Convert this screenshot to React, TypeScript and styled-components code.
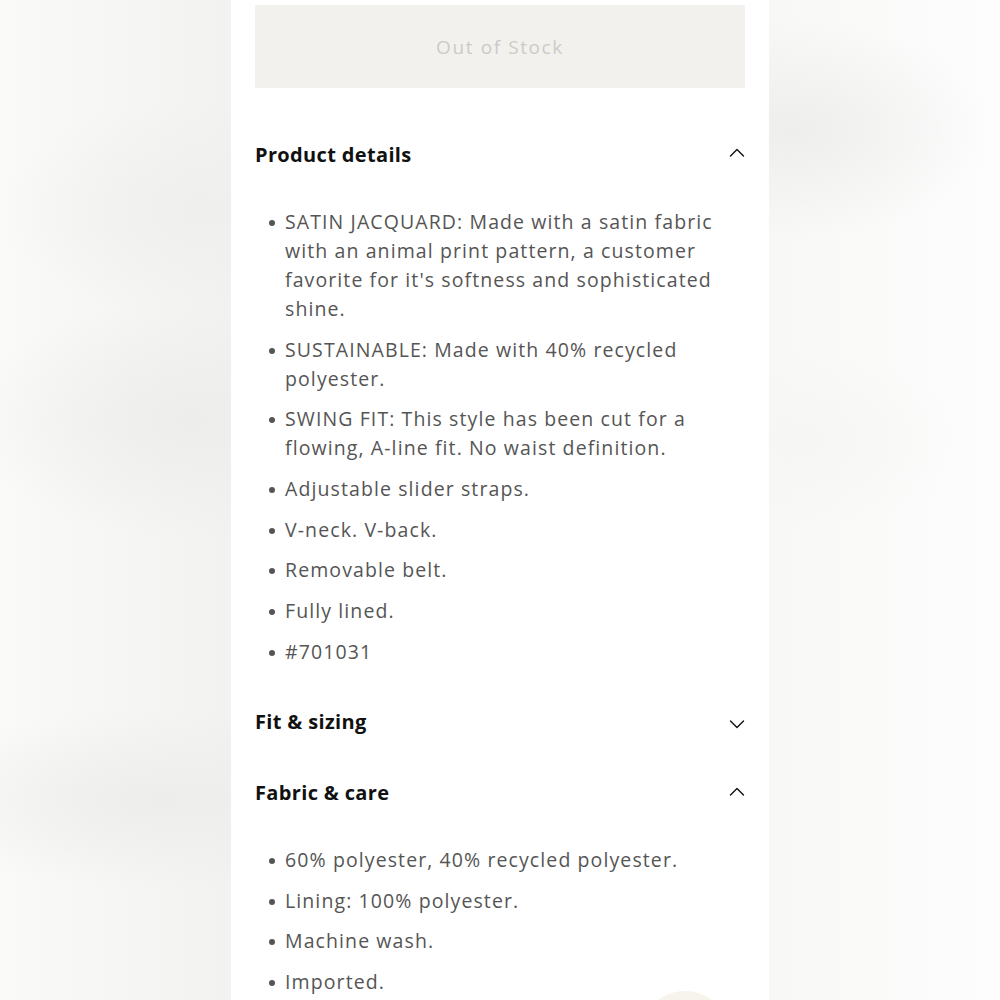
import React from "react";
import styled, { createGlobalStyle } from "styled-components";

const Global = createGlobalStyle`
  html, body { margin: 0; padding: 0; }
  body {
    width: 1000px;
    height: 1000px;
    overflow: hidden;
    font-family: "Open Sans", "Liberation Sans", sans-serif;
    background:
      radial-gradient(ellipse 200px 110px at 200px 210px, #efefee 0%, rgba(239,239,238,0) 100%),
      radial-gradient(ellipse 220px 120px at 190px 420px, #ededec 0%, rgba(237,237,236,0) 100%),
      radial-gradient(ellipse 260px 90px at 160px 800px, #ededec 0%, rgba(237,237,236,0) 100%),
      radial-gradient(ellipse 200px 110px at 790px 130px, #eeeeed 0%, rgba(238,238,237,0) 100%),
      radial-gradient(ellipse 160px 90px at 800px 440px, #f6f6f5 0%, rgba(246,246,245,0) 100%),
      linear-gradient(90deg, #fafaf9 0%, #f2f2f1 23%, #f8f8f7 77%, #fdfdfd 100%);
  }
`;

const Stage = styled.div`
  position: relative;
  width: 1000px;
  height: 1000px;
  display: flex;
  justify-content: center;
  overflow: hidden;
`;

const Panel = styled.main`
  width: 538px;
  height: 1000px;
  background: #ffffff;
  box-sizing: border-box;
  padding: 5px 24px 0;
  display: flex;
  flex-direction: column;
`;

const StockButton = styled.button`
  height: 83px;
  width: 100%;
  border: none;
  background: #f2f1ee;
  color: #cccbc8;
  font-family: inherit;
  font-size: 19px;
  letter-spacing: 1.6px;
  padding-top: 1px;
  cursor: default;
`;

const Section = styled.section<{ $gapTop: number }>`
  display: flex;
  flex-direction: column;
  margin-top: ${(p) => p.$gapTop}px;
`;

const Header = styled.div`
  display: flex;
  align-items: center;
  justify-content: space-between;
  height: 30px;
`;

const Title = styled.h2`
  margin: 0;
  font-size: 20px;
  font-weight: 700;
  color: #111;
  letter-spacing: 0.35px;
`;

const Chevron = styled.svg<{ $up: boolean }>`
  width: 16px;
  height: 16px;
  margin-right: 0;
  transform: translateY(${(p) => (p.$up ? -1 : 2)}px);
`;

const List = styled.ul<{ $top: number }>`
  margin: ${(p) => p.$top}px 0 0;
  padding: 0 0 0 30px;
  list-style: none;
  display: flex;
  flex-direction: column;
  gap: 11.7px;
`;

const Item = styled.li`
  position: relative;
  font-size: 19.5px;
  line-height: 29px;
  letter-spacing: 1.1px;
  color: #555555;
  &::before {
    content: "";
    position: absolute;
    left: -16px;
    top: 13px;
    width: 6px;
    height: 6px;
    border-radius: 50%;
    background: #555;
  }
`;

const Bubble = styled.div`
  position: absolute;
  left: 640px;
  top: 991px;
  width: 90px;
  height: 90px;
  border-radius: 50%;
  background: #f6f4ec;
`;

const Caret = ({ up }: { up: boolean }) => (
  <Chevron $up={up} viewBox="0 0 16 16" fill="none">
    <path
      d={up ? "M1.5 11 L8 4.5 L14.5 11" : "M1.5 5 L8 11.5 L14.5 5"}
      stroke="#111"
      strokeWidth="1.4"
      strokeLinecap="round"
      strokeLinejoin="round"
    />
  </Chevron>
);

const details = [
  "SATIN JACQUARD: Made with a satin fabric with an animal print pattern, a customer favorite for it's softness and sophisticated shine.",
  "SUSTAINABLE: Made with 40% recycled polyester.",
  "SWING FIT: This style has been cut for a flowing, A-line fit. No waist definition.",
  "Adjustable slider straps.",
  "V-neck. V-back.",
  "Removable belt.",
  "Fully lined.",
  "#701031",
];

const care = [
  "60% polyester, 40% recycled polyester.",
  "Lining: 100% polyester.",
  "Machine wash.",
  "Imported.",
];

export default function App() {
  return (
    <>
      <Global />
      <Stage>
        <Panel>
          <StockButton disabled>Out of Stock</StockButton>
          <Section $gapTop={51}>
            <Header>
              <Title>Product details</Title>
              <Caret up />
            </Header>
            <List $top={38}>
              {details.map((d) => (
                <Item key={d}>{d}</Item>
              ))}
            </List>
          </Section>
          <Section $gapTop={41}>
            <Header>
              <Title>Fit &amp; sizing</Title>
              <Caret up={false} />
            </Header>
          </Section>
          <Section $gapTop={41}>
            <Header>
              <Title>Fabric &amp; care</Title>
              <Caret up />
            </Header>
            <List $top={37}>
              {care.map((d) => (
                <Item key={d}>{d}</Item>
              ))}
            </List>
          </Section>
        </Panel>
        <Bubble />
      </Stage>
    </>
  );
}
